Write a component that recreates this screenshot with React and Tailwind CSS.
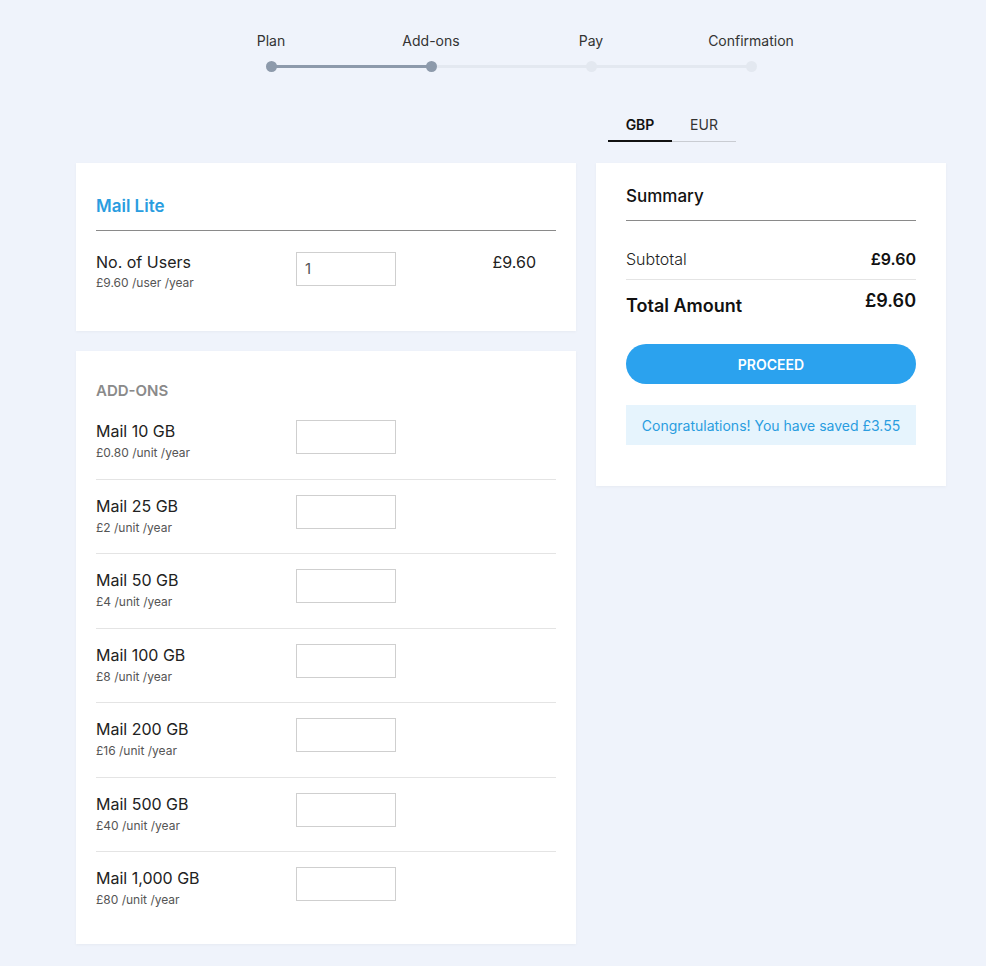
import React from 'react';

const steps = ['Plan', 'Add-ons', 'Pay', 'Confirmation'];

const addons = [
  { name: 'Mail 10 GB', price: '£0.80 /unit /year' },
  { name: 'Mail 25 GB', price: '£2 /unit /year' },
  { name: 'Mail 50 GB', price: '£4 /unit /year' },
  { name: 'Mail 100 GB', price: '£8 /unit /year' },
  { name: 'Mail 200 GB', price: '£16 /unit /year' },
  { name: 'Mail 500 GB', price: '£40 /unit /year' },
  { name: 'Mail 1,000 GB', price: '£80 /unit /year' },
];

function Stepper() {
  return (
    <div className="mx-auto w-[640px]">
      <div className="grid grid-cols-4">
        {steps.map((s) => (
          <div key={s} className="text-center text-[14px] leading-5 text-[#333]">
            {s}
          </div>
        ))}
      </div>
      <div className="relative mt-[10px] h-[10px]">
        <div className="absolute left-[80px] top-[4px] h-[3px] w-[160px] bg-[#8d9aab]" />
        <div className="absolute left-[240px] top-[4px] h-[3px] w-[320px] bg-[#e3e8f0]" />
        <div className="absolute left-[75px] top-0 h-[11px] w-[11px] rounded-full bg-[#8d9aab]" />
        <div className="absolute left-[235px] top-0 h-[11px] w-[11px] rounded-full bg-[#8d9aab]" />
        <div className="absolute left-[395px] top-0 h-[11px] w-[11px] rounded-full bg-[#e3e8f0]" />
        <div className="absolute left-[555px] top-0 h-[11px] w-[11px] rounded-full bg-[#e3e8f0]" />
      </div>
    </div>
  );
}

function Qty({ value }) {
  return (
    <div className="flex h-[34px] w-[100px] shrink-0 items-center border border-[#cfcfcf] bg-white px-[8px] text-[15px] text-[#555]">
      {value}
    </div>
  );
}

export default function App() {
  return (
    <div
      className="min-h-[966px] bg-[#eff3fb] pb-[23px] pt-[31px]"
      style={{ fontFamily: 'Inter, "Noto Sans", sans-serif' }}
    >
      <div className="ml-[76px] w-[870px]">
        <Stepper />

        <div className="flex gap-[20px]">
          {/* left column */}
          <div className="w-[500px] pt-[92px]">
            <div className="bg-white px-[20px] pb-[40px] pt-[33px] shadow-[0_1px_3px_rgba(0,0,0,0.04)]">
              <div className="border-b border-[#8a8a8a] pb-[14px] text-[17px] font-semibold leading-5 text-[#2a9de0]">
                Mail Lite
              </div>
              <div className="flex items-start pt-[21px]">
                <div className="w-[200px]">
                  <div className="text-[16px] leading-5 text-[#222]">No. of Users</div>
                  <div className="mt-[3px] text-[12px] leading-4 text-[#555]">£9.60 /user /year</div>
                </div>
                <Qty value="1" />
                <div className="ml-auto pr-[20px] text-[16px] leading-5 text-[#222]">£9.60</div>
              </div>
            </div>

            <div className="mt-[20px] bg-white px-[20px] pb-[18px] pt-[30px] shadow-[0_1px_3px_rgba(0,0,0,0.04)]">
              <div className="text-[15px] font-semibold leading-5 text-[#8a8a8a]">ADD-ONS</div>
              <div>
                {addons.map((a, i) => (
                  <div
                    key={a.name}
                    className={`flex items-start ${i === 0 ? 'pt-[19px]' : 'pt-[15px]'} pb-[17.5px] ${
                      i < addons.length - 1 ? 'border-b border-[#e4e4e4]' : ''
                    }`}
                  >
                    <div className="w-[200px] pt-[1px]">
                      <div className="text-[16px] leading-5 text-[#222]">{a.name}</div>
                      <div className="mt-[4px] text-[12px] leading-4 text-[#555]">{a.price}</div>
                    </div>
                    <Qty value="" />
                  </div>
                ))}
              </div>
            </div>
          </div>

          {/* right column */}
          <div className="w-[350px] pt-[37px]">
            <div className="ml-[12px] flex h-[34px] w-[128px]">
              <div className="flex w-[64px] items-center justify-center border-b-2 border-[#111] text-[14px] font-semibold text-[#111]">
                GBP
              </div>
              <div className="flex w-[64px] items-center justify-center border-b border-[#c9ccd2] text-[14px] text-[#333]">
                EUR
              </div>
            </div>

            <div className="mt-[21px] bg-white px-[30px] pb-[41px] pt-[23px] shadow-[0_1px_3px_rgba(0,0,0,0.04)]">
              <div className="border-b border-[#8a8a8a] pb-[14px] text-[17px] font-medium leading-5 text-[#111]">
                Summary
              </div>
              <div className="flex items-center justify-between border-b border-[#e4e4e4] pb-[10px] pt-[28px]">
                <span className="text-[16px] font-light leading-5 text-[#222]">Subtotal</span>
                <span className="text-[16px] font-semibold leading-5 text-[#111]">£9.60</span>
              </div>
              <div className="flex items-start justify-between pt-[12px]">
                <span className="pt-[2px] text-[18px] font-semibold leading-6 text-[#111]">Total Amount</span>
                <span className="-mt-[3px] text-[18px] font-semibold leading-6 text-[#111]">£9.60</span>
              </div>
              <button className="mt-[26px] flex h-[40px] w-full items-center justify-center rounded-full bg-[#2ba2ee] text-[14px] font-semibold text-white">
                PROCEED
              </button>
              <div className="mt-[21px] flex h-[40px] items-center justify-center bg-[#e6f4fd] text-[14px] text-[#2a9de0]">
                Congratulations! You have saved £3.55
              </div>
            </div>
          </div>
        </div>
      </div>
    </div>
  );
}
